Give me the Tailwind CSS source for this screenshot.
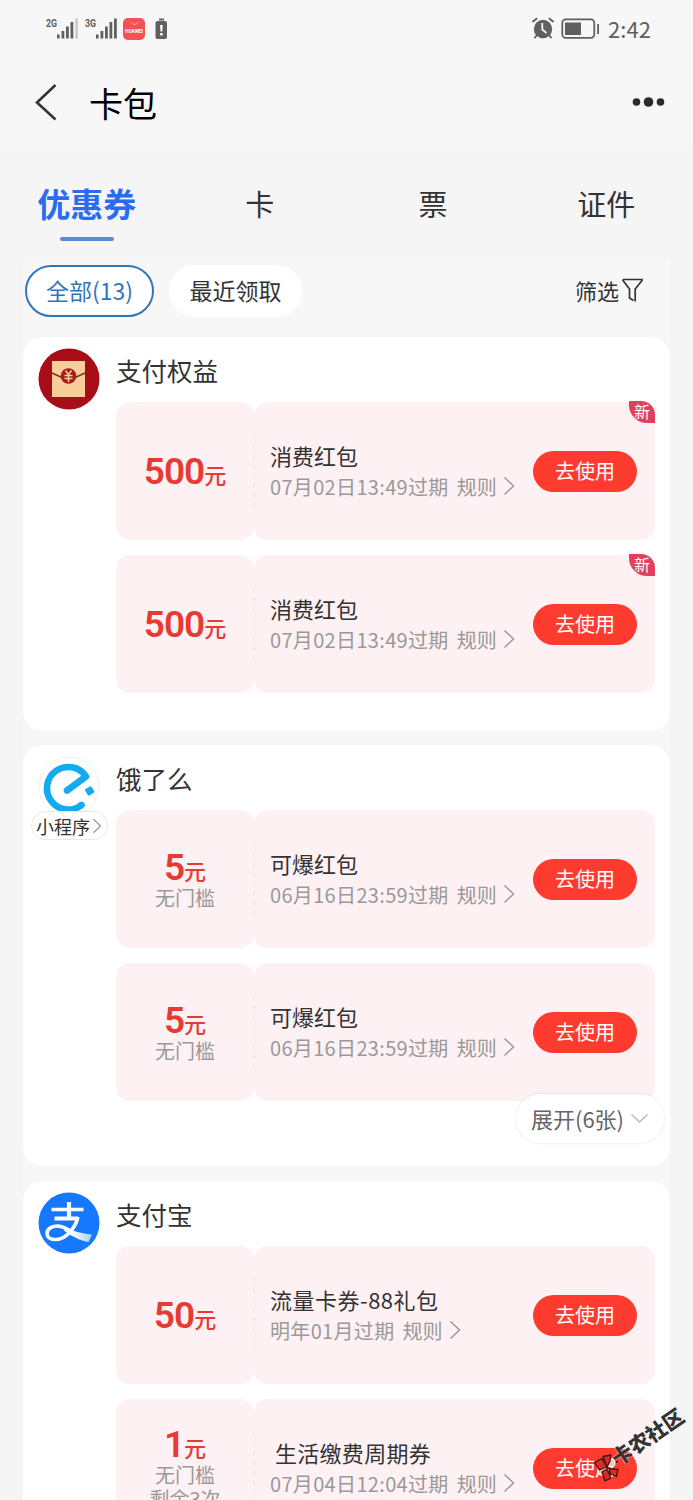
<!DOCTYPE html>
<html lang="zh-CN">
<head>
<meta charset="utf-8">
<title>卡包</title>
<script src="https://cdn.jsdelivr.net/npm/@tailwindcss/browser@4"></script>
</head>
<body class="relative h-[1500px] w-[693px] overflow-hidden bg-[#f5f5f5] font-['Noto_Sans_CJK_SC',sans-serif] text-[#333]">
<header class="h-[149px] bg-[#f7f7f7]">
  <div class="flex h-[58px] items-center justify-between pl-[45px] pr-[42px]">
    <svg width="124" height="30" viewBox="45 14 124 30" fill="#606060">
      <g font-family="Roboto" font-weight="700" font-size="10"><text x="46" y="27" textLength="11" lengthAdjust="spacingAndGlyphs">2G</text><text x="85" y="27" textLength="11" lengthAdjust="spacingAndGlyphs">3G</text></g>
      <path d="M57 34.5h2.6v4H57zM61.5 31h2.8v7.5h-2.8zM66 26.5h2.8v12H66zM70.500 22h2.800v16.500h-2.800z"/>
      <path d="M75.200 18.500h2.800v20h-2.800z" fill="#ccc"/>
      <path d="M96 34.500h2.600v4H96zM100.500 31h2.800v7.500h-2.800zM105 26.500h2.800v12H105zM109.500 22h2.800v16.500h-2.800zM114 18.500h2.800v20H114z"/>
      <rect x="123" y="18" width="22" height="22" rx="5" fill="#f05256"/>
      <path d="M131 22.500q3.500 4 7 0" fill="none" stroke="#ffb0a6" stroke-width="1"/>
      <text x="125" y="32.500" font-family="Roboto" font-weight="700" font-size="5" fill="#fff" textLength="18" lengthAdjust="spacingAndGlyphs">HUAWEI</text>
      <path d="M159 18.500h5v2h-5z"/><rect x="155.500" y="21" width="11.500" height="18" rx="2"/>
      <path d="M160.100 25h2.600l-.4 6.500h-1.800zM160.200 33h2.400v2.400h-2.400z" fill="#fff"/>
    </svg>
    <div class="flex items-center">
      <svg width="68" height="30" viewBox="531 14 68 30" fill="#606060">
        <circle cx="543" cy="29" r="9.200"/>
        <path d="M533 21.500l3.500-2.800M549.500 18.700l3.500 2.800M537 35l-2 2.500M549 35l2 2.500" stroke="#606060" stroke-width="2" stroke-linecap="round"/>
        <path d="M542.300 23v6.500l4.200 3.500" fill="none" stroke="#f7f7f7" stroke-width="1.800"/>
        <rect x="562.300" y="19.300" width="32" height="18.500" rx="3.500" fill="none" stroke="#606060" stroke-width="1.800"/>
        <path d="M565 22.500h16v12.500h-16zM597.200 24h2v10h-2z"/>
      </svg>
      <span class="mb-[2px] ml-[9px] w-[43px] whitespace-nowrap text-[22px] leading-[30px] tracking-[0.1px] text-[#606060]">2:42</span>
    </div>
  </div>
  <div class="flex h-[91px] items-center pl-[33px] pr-[27px]">
    <svg class="mb-1" width="26" height="40" viewBox="0 0 26 40"><path d="M22.500 3L4 20.500l18.500 17" fill="none" stroke="#333" stroke-width="2.600"/></svg>
    <h1 class="mb-[2px] ml-[30px] text-[34px] leading-[40px] text-black">卡包</h1>
    <svg class="mb-1 ml-auto" width="36" height="14" viewBox="0 0 36 14" fill="#2b2b2b"><circle cx="6.500" cy="7" r="3.800"/><circle cx="18.500" cy="7" r="4.800"/><circle cx="30.500" cy="7" r="3.800"/></svg>
  </div>
</header>

<nav class="grid h-[109px] grid-cols-4 pt-[31px] text-center text-[29px] leading-[46px]">
  <div class="flex flex-col items-center"><span class="text-[33px] font-bold text-[#2a6cf0]">优惠券</span><i class="mt-[11px] h-1 w-[54px] rounded-full bg-[#5b88dc]"></i></div>
  <div>卡</div><div>票</div><div>证件</div>
</nav>

<main class="mx-[23px] w-[647px] bg-[#f7f7f7]">
  <div class="flex h-[79px] items-start pl-[2px] pr-[26px] pt-[7px] text-[23px]">
    <div class="flex h-[52px] w-[129px] items-center justify-center rounded-full border-2 border-[#3276ba] bg-white pb-[2px] text-[#3276ba]">全部(13)</div>
    <div class="ml-[15px] flex h-[52px] w-[133px] items-center justify-center rounded-full bg-white pb-[2px]">最近领取</div>
    <div class="ml-auto flex h-[52px] items-center pb-[2px] text-[22px]">筛选<svg class="ml-[2px]" width="23" height="26" viewBox="0 0 23 26"><path d="M2 2.500h19v1L14.200 12v12.500M2 2.500v1L8.500 12v9l4 2.500" fill="none" stroke="#333" stroke-width="1.700"/></svg></div>
  </div>
  <div id="cards" class="flex flex-col"></div>
</main>

<div class="absolute left-[592px] top-[1450px]">
  <svg width="34" height="34" viewBox="0 0 34 34" stroke="#3b1614" stroke-width="1.300" stroke-linejoin="round"><path d="M14 18l12-7" stroke-width="2"/><circle cx="19" cy="13" r="4" fill="#f8c3b8" stroke="#fff"/><circle cx="9.700" cy="21" r="4" fill="#f8c3b8" stroke="#fff"/><path d="M2.500 12.500L10 8.500l5 8.500-7.500 3zM11 6.500L19 5l-1 6-3 6zM17 18.500l9 1-1.500 7-6-2.500zM10 22l5-3 4 9-6 3z" fill="#d92b27"/></svg>
</div>
<div class="absolute left-[605px] top-[1422px] w-[84px] -rotate-[34.5deg] whitespace-nowrap text-center text-[20.500px] font-black leading-[28px] text-[#333] [text-shadow:0_0_2px_#fff]">卡农社区</div>

<script>
const chevron = (w, h, s) => `<svg width="${w}" height="${h}" viewBox="0 0 12 20"><path d="M1.500 1.500L10.500 10l-9 8.500" fill="none" stroke="${s}" stroke-width="1.500"/></svg>`;
const icons = {
  gift: `<svg width="62" height="62" viewBox="0 0 62 62"><circle cx="31" cy="31" r="30.500" fill="#a60d16"/><path d="M14 13h33v36H14z" fill="#f8cf9a"/><path d="M14 25l11 5M47 25l-11 5" stroke="#8b2a20" stroke-width="1.600"/><circle cx="30.500" cy="28" r="7.800" fill="#a61c1b"/><path d="M27.500 22.500l3 4 3-4M30.500 26.500V34M26.500 27.500h8M26.500 30.500h8" stroke="#f8cf9a" stroke-width="1.500" fill="none"/></svg>`,
  eleme: `<svg width="62" height="62" viewBox="0 0 62 62"><circle cx="31" cy="31" r="30" fill="#fff" stroke="#f0f0f0"/><path d="M29 34.500L48 20.500A21.300 21.300 0 1 0 43.500 49" fill="none" stroke="#14aaf0" stroke-width="6.600" stroke-linejoin="round"/><path d="M29 34.500l1-.7M43 49.300l.5-.3" stroke="#14aaf0" stroke-width="6.600" stroke-linecap="round"/><rect x="48" y="31" width="7.500" height="7.500" rx="1.200" fill="#14aaf0" transform="rotate(-32 52 35)"/></svg>`,
  alipay: `<svg width="62" height="62" viewBox="0 0 62 62"><defs><linearGradient id="tail"><stop offset=".3" stop-color="#fff"/><stop offset="1" stop-color="#a5cdfd"/></linearGradient></defs><circle cx="31" cy="31" r="30.500" fill="#1677ff"/><path d="M13.500 17.500H45.500" stroke="#fff" stroke-width="3.600"/><path d="M31 10v16M16.500 26.500H40" stroke="#fff" stroke-width="4.200"/><path d="M40 25c-1.500 6-5 12.500-10 17-4 4-8.500 5.500-13 5.500-5 0-8-2.500-8-6 0-4 4-7.500 10-7.500 5 0 8.500 2 12 4" fill="none" stroke="#fff" stroke-width="3.600"/><path d="M25 34c8 4 17 7.500 29 8.500l-3.500 7.500c-8-1-17-6-24-11z" fill="url(#tail)"/></svg>`
};
const data = [
  {icon: 'gift', name: '支付权益', box: 'h-[394px] mb-[14px]', items: [
    {n: '500', title: '消费红包', date: '07月02日13:49过期', fresh: true},
    {n: '500', title: '消费红包', date: '07月02日13:49过期', fresh: true}]},
  {icon: 'eleme', name: '饿了么', mini: true, box: 'h-[421px] mb-[15px]', more: true, items: [
    {n: '5', notes: ['无门槛'], title: '可爆红包', date: '06月16日23:59过期'},
    {n: '5', notes: ['无门槛'], title: '可爆红包', date: '06月16日23:59过期'}]},
  {icon: 'alipay', name: '支付宝', box: 'h-[319px] overflow-hidden rounded-b-none', items: [
    {n: '50', title: '<span class="tracking-[0.5px]">流量卡券-88礼包</span>', date: '明年01月过期'},
    {n: '1', notes: ['无门槛', '剩余3次'], title: '&nbsp;<span class="tracking-[0.3px]">生活缴费周期券</span>', date: '07月04日12:04过期'}]}
];
const coupon = c => `
<div class="relative flex h-[138px]">
  <div class="flex w-[138px] flex-col items-center justify-center rounded-[14px] bg-[#fdf1f3]">
    <div class="flex h-[38px] items-baseline text-[#e63b35]"><b class="font-[Roboto] text-[37px] font-semibold leading-[39px] tracking-[-1px]">${c.n}</b><span class="text-[22px] font-medium leading-[30px]">元</span></div>
    ${(c.notes || []).map(t => `<div class="text-[20px] leading-[24px] text-[#999]">${t}</div>`).join('')}
  </div>
  <div class="flex flex-1 items-center rounded-[14px] bg-[#fdf1f3] pl-4 pr-[18px]">
    <div class="-mt-px whitespace-nowrap">
      <div class="text-[22px] leading-[31px]">${c.title}</div>
      <div class="flex items-center text-[20px] leading-[31px] text-[#999]"><span class="tracking-[0.33px]">${c.date}</span><span class="ml-2 mr-[6px]">规则</span>${chevron(12, 20, '#999')}</div>
    </div>
    <div class="ml-auto flex h-[41px] w-[104px] items-center justify-center rounded-full bg-[#ff3b30] text-[20px] leading-[30px] text-white">去使用</div>
  </div>
  <i class="absolute left-[137px] top-8 h-[74px] border-l-2 border-dashed border-[#f6e8ec]"></i>
  ${c.fresh ? '<div class="absolute -top-px right-0 h-[22px] w-[26px] rounded-bl-[18px] rounded-tr-[14px] bg-[#e2405c] text-center text-[16px] leading-[21px] text-white">新</div>' : ''}
</div>`;
document.getElementById('cards').innerHTML = data.map(s => `
<section class="relative flex rounded-[20px] bg-white ${s.box}">
  <div class="flex w-[92px] shrink-0 flex-col items-center pt-[11px]">${icons[s.icon]}
    ${s.mini ? `<div class="relative -mt-[7px] flex h-[29px] w-[77px] items-center justify-center whitespace-nowrap rounded-full border border-[#e8e8e8] bg-white text-[18px] leading-[26px]">小程序<span class="ml-[2px]">${chevron(10, 16, '#999')}</span></div>` : ''}
  </div>
  <div class="ml-px w-[539px]">
    <h2 class="h-[65px] pt-[16px] text-[25.500px] leading-[34px]">${s.name}</h2>
    <div class="flex flex-col gap-[15px]">${s.items.map(coupon).join('')}</div>
  </div>
  ${s.more ? `<div class="absolute bottom-[23px] right-[6px] flex h-[49px] w-[148px] items-center justify-center rounded-full bg-white pb-px text-[22px] text-[#666] shadow-[0_0_3px_rgba(0,0,0,0.12)]">展开(6张)<svg class="ml-[6px]" width="19" height="11" viewBox="0 0 19 11"><path d="M1.500 1.500l8 7.500 8-7.500" fill="none" stroke="#bbb" stroke-width="1.600"/></svg></div>` : ''}
</section>`).join('');
</script>
</body>
</html>
